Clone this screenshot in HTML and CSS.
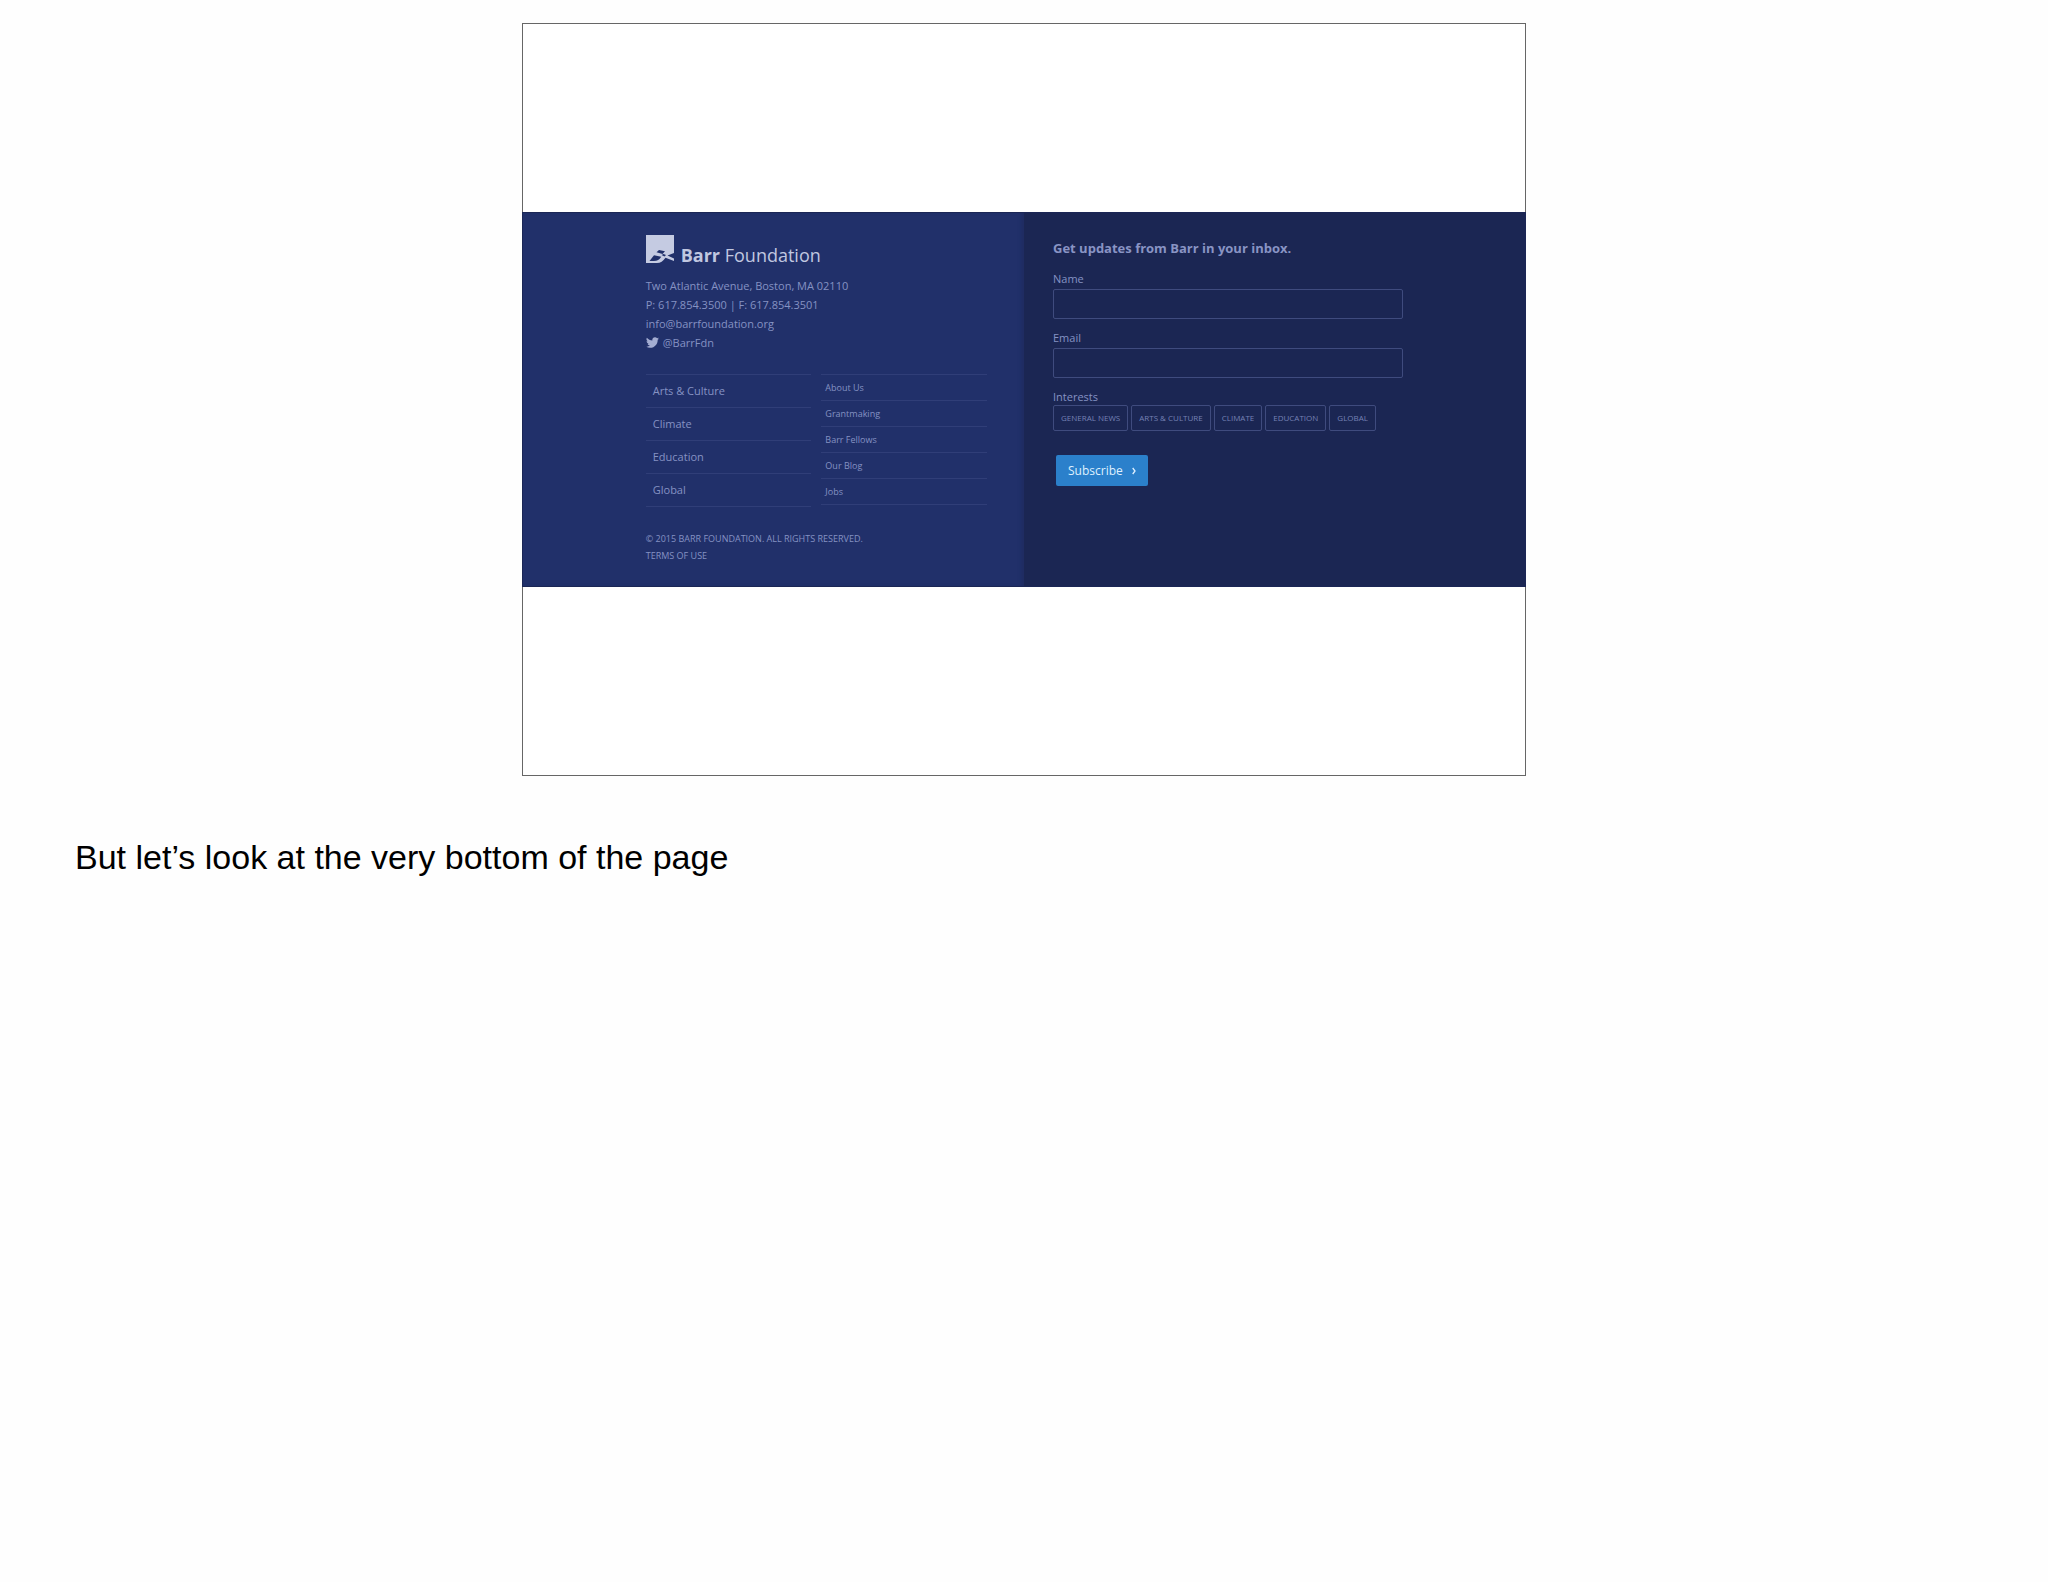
FILE: index.html
```html
<!DOCTYPE html>
<html lang="en">
	<head>
		<meta charset="utf-8">
		<title>Barr Foundation footer</title>
		<link rel="stylesheet" href="styles.css">
	</head>
	<body>
		<div class="slide">
			<div class="footer">
				<div class="left">
					<a class="logo" href="#">
						<svg class="mark" viewBox="0 0 28 28">
							<path fill="#c5cbe2" d="M0 0h28v18l-6.500 2.500L28 23.500V26l-8.500-3.300C17 26 14.500 28 11 28H0z"/>
							<path fill="#21306a" d="M10.500 17.300L13 15l6 1.200-2.500 2.700z"/>
							<path fill="#21306a" d="M3.500 26L8 20.300l7.300 1.400c-2 3-4 4.300-7.300 4.300z"/>
							<path fill="#21306a" d="M15.500 20l2-1 2.500 1-1.500 1.500z"/>
						</svg>
						<span class="logotext"><b>Barr</b> Foundation</span>
					</a>
					<div class="address">
						<p>Two Atlantic Avenue, Boston, MA 02110</p>
						<p>P: 617.854.3500 | F: 617.854.3501</p>
						<p><a href="#">info@barrfoundation.org</a></p>
						<p><a class="twitter" href="#">
							<svg class="bird" viewBox="0 0 24 24"><path fill="currentColor" d="M23.950 4.570a10 10 0 0 1-2.820.770 4.960 4.960 0 0 0 2.160-2.720c-.950.550-2 .960-3.120 1.180a4.920 4.920 0 0 0-8.380 4.480C7.690 8.090 4.070 6.130 1.640 3.160a4.930 4.930 0 0 0 1.520 6.570 4.900 4.900 0 0 1-2.230-.610v.060a4.920 4.920 0 0 0 3.950 4.830 5 5 0 0 1-2.210.080 4.940 4.940 0 0 0 4.600 3.420A9.870 9.870 0 0 1 0 19.540a14 14 0 0 0 7.550 2.210c9.050 0 14-7.500 14-13.980 0-.210 0-.420-.020-.630a9.900 9.900 0 0 0 2.420-2.570z"/></svg>
							@BarrFdn</a></p>
					</div>
					<div class="menus">
						<ul class="programs">
							<li><a href="#">Arts &amp; Culture</a></li>
							<li><a href="#">Climate</a></li>
							<li><a href="#">Education</a></li>
							<li><a href="#">Global</a></li>
						</ul>
						<ul class="pages">
							<li><a href="#">About Us</a></li>
							<li><a href="#">Grantmaking</a></li>
							<li><a href="#">Barr Fellows</a></li>
							<li><a href="#">Our Blog</a></li>
							<li><a href="#">Jobs</a></li>
						</ul>
					</div>
					<div class="legal">
						<p>© 2015 BARR FOUNDATION. ALL RIGHTS RESERVED.</p>
						<p><a href="#">TERMS OF USE</a></p>
					</div>
				</div>
				<form class="right">
					<h2>Get updates from Barr in your inbox.</h2>
					<label class="title" for="name">Name</label>
					<input class="box" type="text" id="name">
					<label class="title" for="email">Email</label>
					<input class="box" type="email" id="email">
					<fieldset class="interests">
						<legend class="title">Interests</legend>
						<div class="tags">
							<label class="tag"><input type="checkbox">GENERAL NEWS</label>
							<label class="tag"><input type="checkbox">ARTS &amp; CULTURE</label>
							<label class="tag"><input type="checkbox">CLIMATE</label>
							<label class="tag"><input type="checkbox">EDUCATION</label>
							<label class="tag"><input type="checkbox">GLOBAL</label>
						</div>
					</fieldset>
					<button class="subscribe" type="button">Subscribe
						<svg class="arrow" viewBox="0 0 4 8"><path fill="none" stroke="currentColor" stroke-width="1.300" d="M.7 1l2.300 3L.7 7"/></svg>
					</button>
				</form>
			</div>
		</div>
		<p class="note">But let’s look at the very bottom of the page</p>
	</body>
</html>
```
FILE: styles.css
```css
*{
	margin:0;
	padding:0;
	box-sizing:border-box;
}
body{
	background-color:#fefefe;
	font-family:"Open Sans","Noto Sans",sans-serif;
	padding-top:23px;
}
a{
	color:inherit;
	text-decoration:none;
}
ul{
	list-style:none;
}
.slide{
	width:49.05%;
	aspect-ratio:4/3;
	margin:0 auto;
	border:1px solid #666;
	background-color:#fff;
	display:flex;
	align-items:center;
}
.footer{
	display:flex;
	flex:1;
	margin:0 -1px;
	color:#8592c3;
	border:1px solid #1b2655;
}
.left{
	width:50%;
	padding:22px 37px 22px 123px;
	background-color:#21306a;
	box-shadow:inset -4px 0 4px -2px #1f2b60;
}
.logo{
	display:flex;
	gap:7px;
	align-items:flex-end;
	color:#c0c7e0;
}
.mark{
	width:28px;
	height:28px;
}
.logotext{
	font-size:18px;
	line-height:16px;
	white-space:nowrap;
}
.address{
	margin-top:13px;
	font-size:11px;
	line-height:19px;
}
.twitter{
	display:flex;
	align-items:center;
	gap:4px;
}
.bird{
	width:13px;
	height:13px;
	color:#a4add2;
}
.menus{
	display:grid;
	grid-template-columns:1fr 1fr;
	gap:10px;
	margin-top:22px;
}
.menus ul{
	border-top:1px solid #303e78;
}
.menus li{
	border-bottom:1px solid #303e78;
}
.programs li{
	padding-left:7px;
	font-size:11px;
	line-height:32px;
}
.pages li{
	padding-left:4px;
	font-size:9px;
	line-height:25px;
}
.legal{
	margin-top:23px;
	font-size:9px;
	line-height:17px;
}
.right{
	width:50%;
	padding:24px 122px 0 29px;
	background-color:#1b2653;
}
.right h2{
	font-size:13px;
	line-height:22px;
	color:#8994c4;
	white-space:nowrap;
}
.title{
	display:block;
	font-size:11px;
	line-height:15px;
}
h2 + .title{
	margin-top:12px;
}
.box{
	display:block;
	width:100%;
	height:30px;
	margin:3px 0 11px;
	padding:0 8px;
	border:1px solid #3f4b7e;
	border-radius:2px;
	background:none;
	color:#c0c7e0;
	font-size:12px;
}
.interests{
	border:none;
}
.tags{
	display:flex;
	gap:3px;
	margin-top:1px;
}
.tag{
	padding:0 7px;
	border:1px solid #3f4b7e;
	border-radius:2px;
	font-size:8px;
	line-height:24px;
	color:#7581b4;
	white-space:nowrap;
}
.tag input{
	position:absolute;
	opacity:0;
}
.subscribe{
	display:flex;
	align-items:center;
	gap:9px;
	margin:24px 0 0 3px;
	padding:0 12px;
	border:none;
	border-radius:2px;
	background-color:#2b80cb;
	color:#dff0ff;
	font-family:inherit;
	font-size:12px;
	line-height:31px;
}
.arrow{
	width:4px;
	height:8px;
}
.note{
	margin:59px 75px;
	font-family:"Liberation Sans",Arial,sans-serif;
	font-size:34px;
	line-height:44px;
	color:#000;
}
```
